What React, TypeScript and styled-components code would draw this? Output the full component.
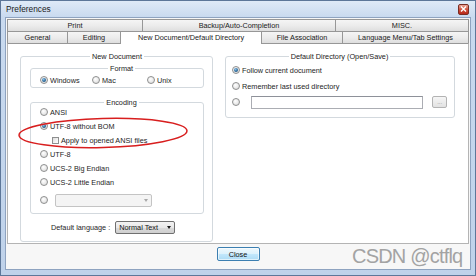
import React from "react";
import styled, { createGlobalStyle } from "styled-components";

const Global = createGlobalStyle`
  html, body { margin: 0; padding: 0; background: #ffffff; }
  body { font-family: "Liberation Sans", Arial, sans-serif; }
  * { box-sizing: border-box; }
`;

const Window = styled.div`
  position: relative;
  width: 476px;
  height: 276px;
  border: 1px solid #5d7799;
  background: linear-gradient(180deg, #dfeaf7 0px, #c9daef 16px, #bfd2ea 100%);
  display: flex;
  flex-direction: column;
  padding: 0 4px 5px 4px;
  overflow: hidden;
`;

const TitleBar = styled.div`
  height: 16px;
  flex: none;
  display: flex;
  align-items: center;
  justify-content: space-between;
  padding-left: 1px;
`;

const Title = styled.span`
  font-size: 8.3px;
  color: #1b1b1b;
`;

const CloseBox = styled.div`
  width: 11px;
  height: 11px;
  margin-right: 2px;
  border: 1px solid #7a2c22;
  border-radius: 2px;
  background: linear-gradient(180deg, #eaa698 0%, #d0503b 50%, #b8281a 100%);
  display: grid;
  place-items: center;
`;

const Client = styled.div`
  flex: 1;
  border: 1px solid #8ea3c0;
  background: #f7f7f7;
  padding: 1px 1px 0 1px;
  display: flex;
  flex-direction: column;
`;

const TabRow = styled.div`
  display: flex;
  height: 12px;
  flex: none;
`;

const Tab = styled.div<{ $w?: number; $active?: boolean }>`
  flex: ${(p) => (p.$w ? `0 0 ${p.$w}px` : "1 1 auto")};
  height: ${(p) => (p.$active ? 13 : 12)}px;
  margin-left: -1px;
  &:first-child { margin-left: 0; }
  border: 1px solid #979797;
  border-bottom: none;
  background: ${(p) =>
    p.$active ? "#ffffff" : "linear-gradient(180deg, #f5f5f5 0%, #ebebeb 55%, #dedede 100%)"};
  position: relative;
  z-index: ${(p) => (p.$active ? 2 : 1)};
  display: flex;
  align-items: center;
  justify-content: center;
  padding-bottom: ${(p) => (p.$active ? 1 : 0)}px;
  font-size: 7.3px;
  color: #1a1a1a;
  white-space: nowrap;
`;

const TabPage = styled.div`
  height: 201px;
  flex: none;
  border: 1px solid #b4b4b4;
  border-top-color: #979797;
  background: #ffffff;
  padding: 8px 0 0 12px;
  display: flex;
  gap: 12px;
  align-items: flex-start;
`;

const GroupBox = styled.fieldset<{ $w?: number; $pad: string; $mt?: number }>`
  ${(p) => (p.$w ? `width: ${p.$w}px;` : "")}
  margin: ${(p) => p.$mt ?? 0}px 0 0 0;
  padding: ${(p) => p.$pad};
  min-width: 0;
  border: 1px solid #d3d9de;
  border-radius: 3px;
  display: flex;
  flex-direction: column;
`;

const Legend = styled.legend`
  margin: 0 auto;
  padding: 0 2px;
  font-size: 7.3px;
  line-height: 9px;
  color: #222;
`;

const Option = styled.div<{ $mt?: number; $indent?: number; $h?: number }>`
  display: flex;
  align-items: center;
  gap: 2px;
  height: ${(p) => p.$h ?? 14}px;
  margin-top: ${(p) => p.$mt ?? 0}px;
  margin-left: ${(p) => p.$indent ?? 0}px;
  font-size: 7.3px;
  color: #1e1e1e;
  white-space: nowrap;
`;

const FormatRow = styled.div`
  display: grid;
  grid-template-columns: 52px 55px auto;
  height: 14px;
  align-items: center;
`;

const Radio = styled.span<{ $on?: boolean }>`
  width: 8px;
  height: 8px;
  flex: none;
  border-radius: 50%;
  border: 1px solid #8e8f8f;
  background: radial-gradient(circle at 40% 35%, #ffffff 0%, #e9e9e9 55%, #d4d4d4 100%);
  display: grid;
  place-items: center;
  &::after {
    content: "";
    width: 4px;
    height: 4px;
    border-radius: 50%;
    background: radial-gradient(circle at 40% 35%, #8cc0e6 0%, #2d6c9e 55%, #163f60 100%);
    display: ${(p) => (p.$on ? "block" : "none")};
  }
`;

const Check = styled.span`
  width: 7px;
  height: 7px;
  flex: none;
  border: 1px solid #8e8f8f;
  background: linear-gradient(135deg, #dcdcdc 0%, #f4f4f4 60%, #ffffff 100%);
`;

const EncodingList = styled.div`
  display: flex;
  flex-direction: column;
  margin-top: -2px;
`;

const Combo = styled.div<{ $w: number; $disabled?: boolean; $ml?: number }>`
  width: ${(p) => p.$w}px;
  height: 13px;
  margin-left: ${(p) => p.$ml ?? 0}px;
  border: 1px solid ${(p) => (p.$disabled ? "#c4c4c4" : "#707070")};
  border-radius: 2px;
  background: ${(p) =>
    p.$disabled ? "#f4f4f4" : "linear-gradient(180deg, #f3f3f3 0%, #e8e8e8 50%, #dadada 51%, #cfcfcf 100%)"};
  display: flex;
  align-items: center;
  justify-content: space-between;
  padding-left: 3px;
  font-size: 7.3px;
  color: #111;
`;

const ComboArrow = styled.span<{ $disabled?: boolean }>`
  width: 10px;
  height: 100%;
  display: grid;
  place-items: center;
  &::after {
    content: "";
    border-left: 2.5px solid transparent;
    border-right: 2.5px solid transparent;
    border-top: 3px solid ${(p) => (p.$disabled ? "#a8a8a8" : "#1a1a1a")};
  }
`;

const LangRow = styled.div`
  display: flex;
  align-items: center;
  height: 13px;
  margin-top: 7px;
  padding-left: 21px;
  font-size: 7.3px;
  color: #1e1e1e;
  white-space: nowrap;
`;

const RightList = styled.div`
  display: flex;
  flex-direction: column;
  gap: 2px;
`;

const PathBox = styled.div`
  width: 177px;
  height: 13px;
  margin-left: 9px;
  border: 1px solid #abadb3;
  border-top-color: #8e9199;
  background: #ffffff;
`;

const BrowseButton = styled.div`
  width: 15px;
  height: 12px;
  margin-left: 7px;
  border: 1px solid #b3b3b3;
  border-radius: 2px;
  background: linear-gradient(180deg, #f6f6f6, #e2e2e2);
  font-size: 6px;
  color: #8a8a8a;
  display: grid;
  place-items: center;
  line-height: 1;
`;

const Footer = styled.div`
  display: flex;
  justify-content: center;
  padding-top: 3px;
`;

const CloseButton = styled.div`
  width: 43px;
  height: 14px;
  border: 1px solid #3c7fb1;
  border-radius: 2px;
  background: linear-gradient(180deg, #eef8fd 0%, #dcf1fc 50%, #c2e7fc 51%, #acdbf5 100%);
  box-shadow: inset 0 0 0 1px rgba(255, 255, 255, 0.6);
  display: grid;
  place-items: center;
  font-size: 7.3px;
  color: #111;
`;

const Watermark = styled.div`
  position: absolute;
  left: 351px;
  top: 245px;
  font-size: 20px;
  line-height: 1;
  letter-spacing: -0.8px;
  color: #a3a3a3;
  white-space: nowrap;
`;

const Annotation = styled.svg`
  position: absolute;
  left: 15px;
  top: 113px;
  overflow: visible;
`;

export default function App() {
  return (
    <>
      <Global />
      <Window>
        <TitleBar>
          <Title>Preferences</Title>
          <CloseBox>
            <svg width="7" height="6" viewBox="0 0 7 6">
              <path d="M1 0.5 L6 5.5 M6 0.5 L1 5.5" stroke="#ffffff" strokeWidth="1.4" />
            </svg>
          </CloseBox>
        </TitleBar>
        <Client>
          <TabRow>
            <Tab $w={136}>Print</Tab>
            <Tab $w={194}>Backup/Auto-Completion</Tab>
            <Tab>MISC.</Tab>
          </TabRow>
          <TabRow>
            <Tab $w={61}>General</Tab>
            <Tab $w={54}>Editing</Tab>
            <Tab $w={142} $active>
              New Document/Default Directory
            </Tab>
            <Tab $w={82}>File Association</Tab>
            <Tab>Language Menu/Tab Settings</Tab>
          </TabRow>
          <TabPage>
            <GroupBox $w={193} $pad="0 8px 7px 9px">
              <Legend>New Document</Legend>
              <GroupBox $pad="0 0 0 9px" $mt={3}>
                <Legend>Format</Legend>
                <FormatRow>
                  <Option>
                    <Radio $on />
                    Windows
                  </Option>
                  <Option>
                    <Radio />
                    Mac
                  </Option>
                  <Option>
                    <Radio />
                    Unix
                  </Option>
                </FormatRow>
              </GroupBox>
              <GroupBox $pad="0 0 5px 9px" $mt={10}>
                <Legend>Encoding</Legend>
                <EncodingList>
                  <Option>
                    <Radio />
                    ANSI
                  </Option>
                  <Option>
                    <Radio $on />
                    UTF-8 without BOM
                  </Option>
                  <Option $indent={12}>
                    <Check />
                    Apply to opened ANSI files
                  </Option>
                  <Option>
                    <Radio />
                    UTF-8
                  </Option>
                  <Option>
                    <Radio />
                    UCS-2 Big Endian
                  </Option>
                  <Option>
                    <Radio />
                    UCS-2 Little Endian
                  </Option>
                  <Option $mt={3} $h={16}>
                    <Radio />
                    <Combo $w={97} $ml={5} $disabled>
                      <span />
                      <ComboArrow $disabled />
                    </Combo>
                  </Option>
                </EncodingList>
              </GroupBox>
              <LangRow>
                Default language :
                <Combo $w={60} $ml={5}>
                  Normal Text
                  <ComboArrow />
                </Combo>
              </LangRow>
            </GroupBox>
            <GroupBox $w={230} $pad="2px 7px 8px 6px">
              <Legend>Default Directory (Open/Save)</Legend>
              <RightList>
                <Option>
                  <Radio $on />
                  Follow current document
                </Option>
                <Option>
                  <Radio />
                  Remember last used directory
                </Option>
                <Option>
                  <Radio />
                  <PathBox />
                  <BrowseButton>...</BrowseButton>
                </Option>
              </RightList>
            </GroupBox>
          </TabPage>
          <Footer>
            <CloseButton>Close</CloseButton>
          </Footer>
        </Client>
        <Watermark>CSDN @ctflq</Watermark>
        <Annotation width="174" height="38" viewBox="0 0 174 38">
          <ellipse
            cx="87"
            cy="19"
            rx="84"
            ry="14.5"
            fill="none"
            stroke="#d81e1e"
            strokeWidth="1.5"
            transform="rotate(-1.5 87 19)"
          />
        </Annotation>
      </Window>
    </>
  );
}
